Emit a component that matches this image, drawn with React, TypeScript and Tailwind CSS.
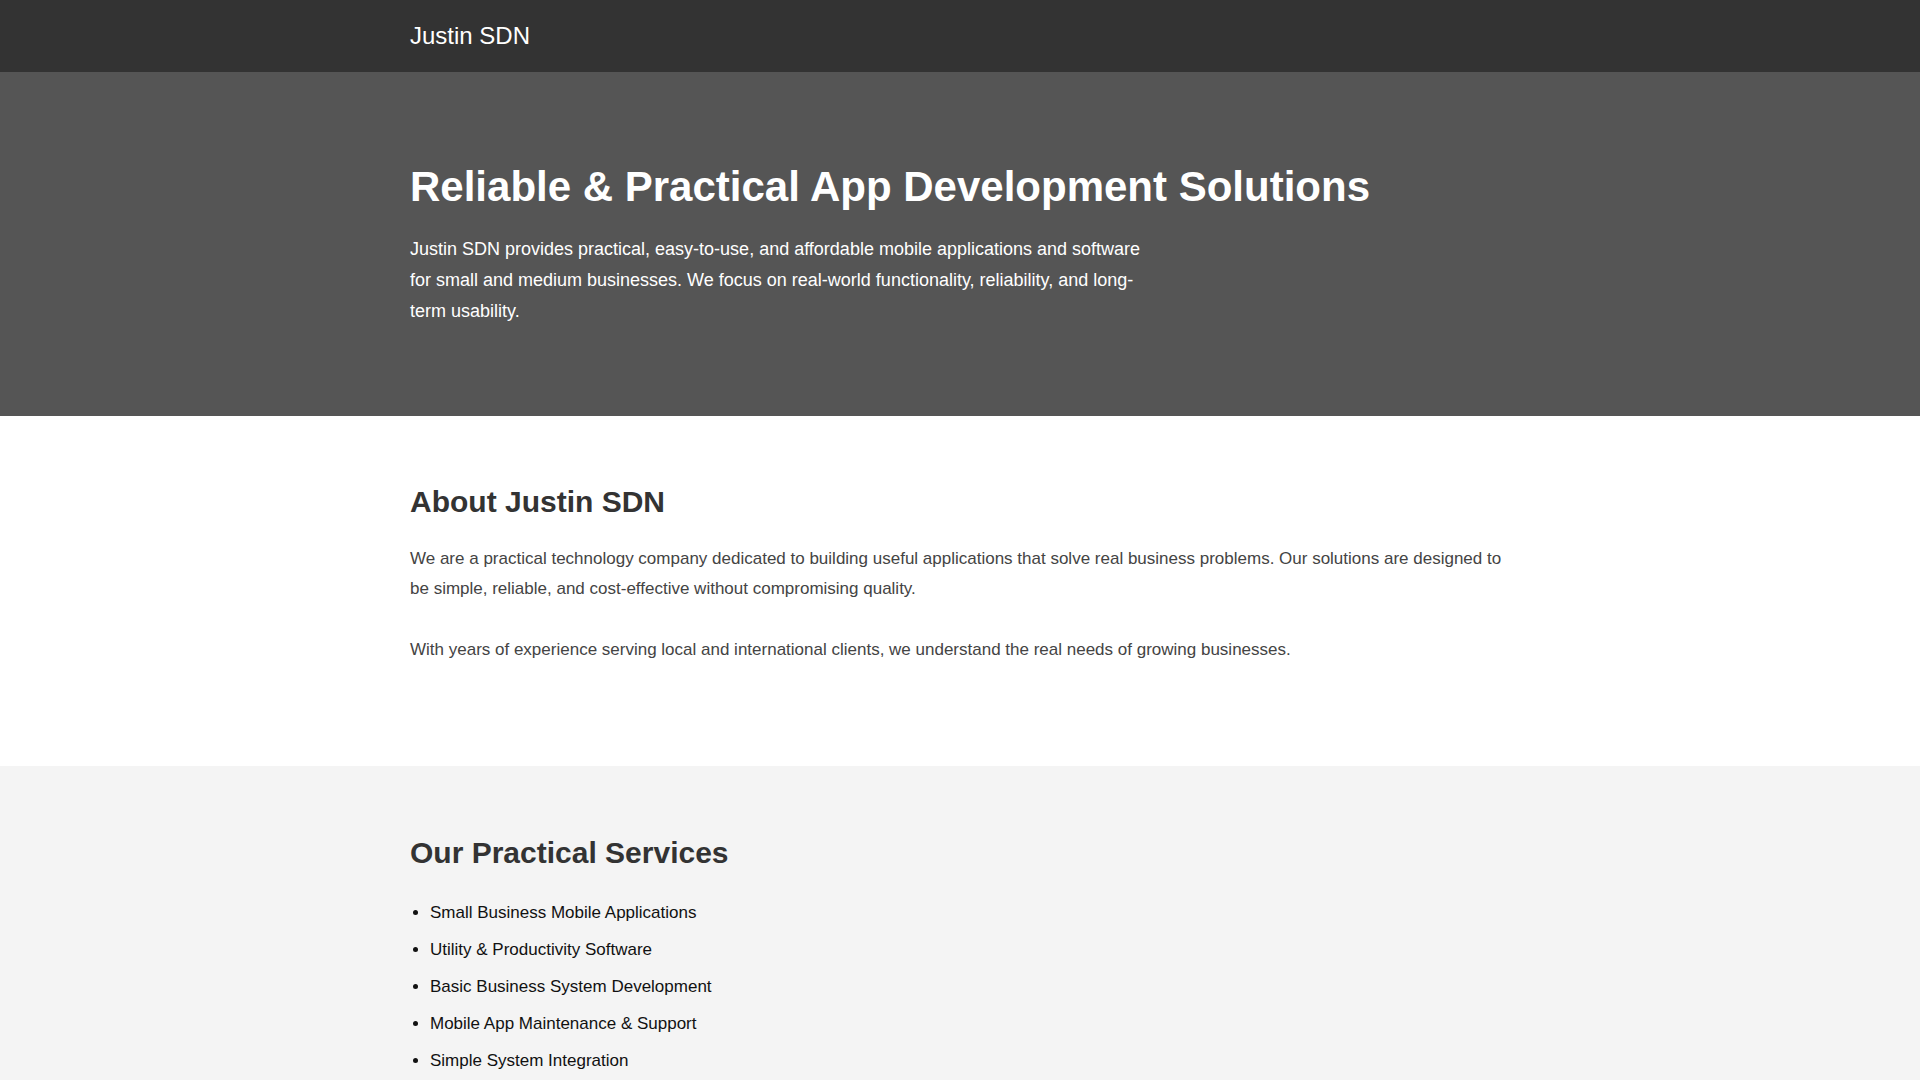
export default function App() {
  const services = [
    'Small Business Mobile Applications',
    'Utility & Productivity Software',
    'Basic Business System Development',
    'Mobile App Maintenance & Support',
    'Simple System Integration',
  ];

  return (
    <div className="min-h-screen bg-white font-['Liberation_Sans',Arial,sans-serif]">
      <header className="bg-[#333333]">
        <div className="mx-auto flex h-[72px] max-w-[1100px] items-center">
          <span className="text-[24px] text-white">Justin SDN</span>
        </div>
      </header>

      <section className="bg-[#555555] text-white">
        <div className="mx-auto max-w-[1100px] pt-[90px] pb-[90px]">
          <h1 className="text-[42px] leading-[1.2] font-bold">
            Reliable &amp; Practical App Development Solutions
          </h1>
          <p className="mt-[22px] max-w-[740px] text-[18px] leading-[1.7]">
            Justin SDN provides practical, easy-to-use, and affordable mobile applications and software
            for small and medium businesses. We focus on real-world functionality, reliability, and
            long-term usability.
          </p>
        </div>
      </section>

      <section className="bg-white">
        <div className="mx-auto max-w-[1100px] pt-[68px] pb-[101px]">
          <h2 className="text-[30px] leading-[1.2] font-bold text-[#333333]">About Justin SDN</h2>
          <p className="mt-[24px] text-[17px] leading-[30px] text-[#444444]">
            We are a practical technology company dedicated to building useful applications that solve
            real business problems. Our solutions are designed to be simple, reliable, and
            cost-effective without compromising quality.
          </p>
          <p className="mt-[31px] text-[17px] leading-[30px] text-[#444444]">
            With years of experience serving local and international clients, we understand the real
            needs of growing businesses.
          </p>
        </div>
      </section>

      <section className="bg-[#f4f4f4]">
        <div className="mx-auto max-w-[1100px] pt-[69px] pb-[80px]">
          <h2 className="text-[30px] leading-[1.2] font-bold text-[#333333]">Our Practical Services</h2>
          <ul className="mt-[27px] list-disc pl-[20px] text-[17px] leading-[30px] text-[#111111]">
            {services.map((s) => (
              <li key={s} className="mb-[7px]">
                {s}
              </li>
            ))}
          </ul>
        </div>
      </section>
    </div>
  );
}
